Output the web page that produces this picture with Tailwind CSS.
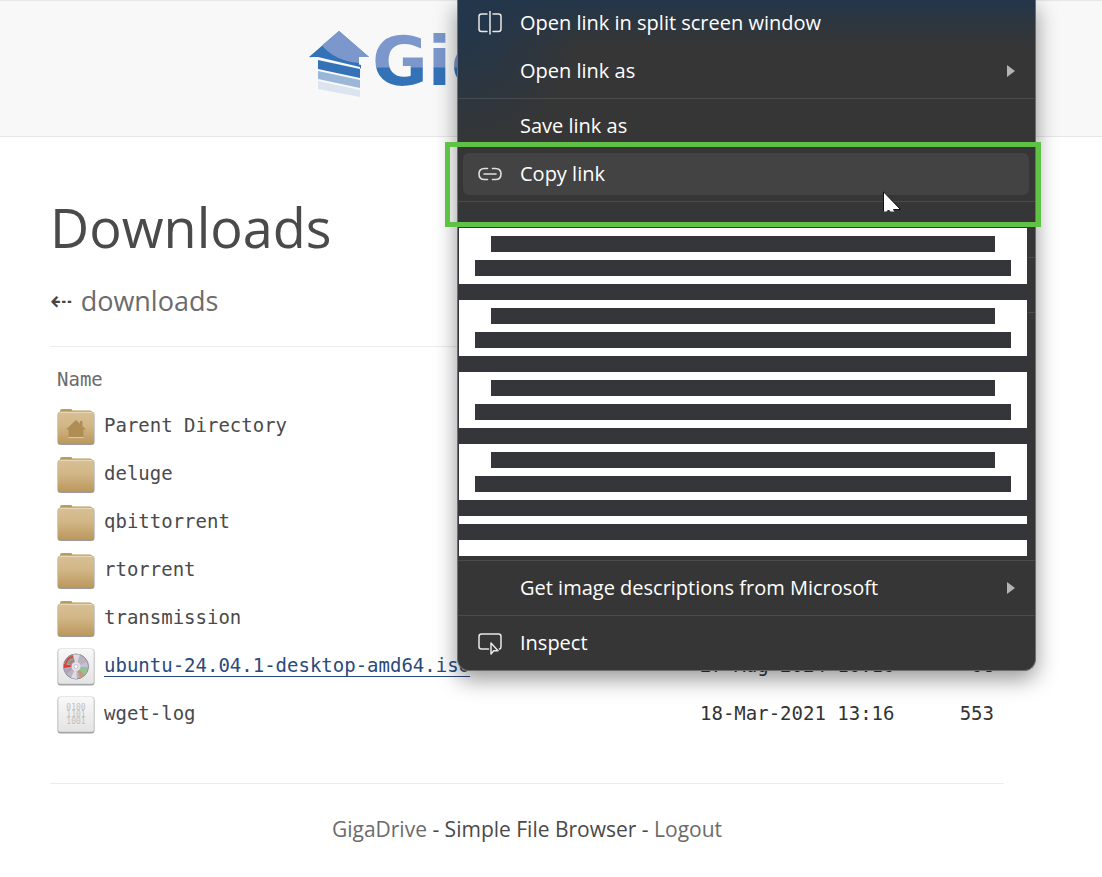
<!DOCTYPE html>
<html lang="en">
<head>
<meta charset="utf-8">
<meta name="viewport" content="width=device-width, initial-scale=1">
<title>Downloads - GigaDrive</title>
<script src="https://cdn.jsdelivr.net/npm/@tailwindcss/browser@4"></script>
</head>
<body class="relative min-h-screen overflow-x-hidden bg-white font-['Open_Sans',sans-serif] text-[#4a4a4a]">

<!-- Shared icon shapes -->
<svg class="absolute size-0" aria-hidden="true">
  <defs>
    <linearGradient id="tan" x1="0" y1="0" x2="0" y2="1"><stop offset="0" stop-color="#d8c096"/><stop offset=".45" stop-color="#d2b686"/><stop offset="1" stop-color="#ba985d"/></linearGradient>
    <linearGradient id="paper" x1="0" y1="0" x2="0" y2="1"><stop offset="0" stop-color="#f8f8f8"/><stop offset="1" stop-color="#e4e4e4"/></linearGradient>
    <symbol id="folder" viewBox="0 0 38 38">
      <path d="M3 9V3q0-2 2-2h9q1 0 1.500 1.500H33q2 0 2.500 2V9z" fill="#b99a63"/>
      <rect x=".5" y="4" width="37" height="33" rx="3" fill="#9b9a9c"/>
      <rect x="1" y="3.500" width="36" height="32" rx="2.500" fill="url(#tan)"/>
      <path d="M3 4.500h32" stroke="#e8d6b4"/>
    </symbol>
    <symbol id="sheet" viewBox="0 0 38 38">
      <rect x=".5" y="2" width="37" height="35.500" rx="3" fill="#a4a4a4"/>
      <rect x=".5" y=".5" width="37" height="35.500" rx="3" fill="#d0d0d0"/>
      <rect x="1.500" y="1" width="35" height="34.500" rx="2.500" fill="url(#paper)"/>
    </symbol>
  </defs>
</svg>

<header class="h-[137px] border-y border-[#e7e7e7] bg-[#f8f8f8] pr-[98px] pl-[50px]">
  <a href="#" class="mx-auto flex w-[436px] items-start" aria-label="GigaDrive">
    <svg class="mt-[30px] h-[66px] w-[60px] shrink-0" viewBox="0 0 60 66" aria-hidden="true">
      <path d="M30 0L60 26H50V36L0 26z" fill="#3472b8"/>
      <path d="M30 0L60 26H50V32Q26 30 13 14.500z" fill="#7b97cb"/>
      <path d="M0 26l9 1 43 10.500v-3.500L20 26z" fill="#3472b8"/>
      <path d="M0 26H9L51 36v5L9 29z" fill="#f8f8f8"/>
      <path d="M9 29L51 38v9L9 38z" fill="#3472b8"/>
      <path d="M9 40L51 49v8L9 48z" fill="#9ab7d7"/>
      <path d="M9 50L51 59v7L9 58z" fill="#dbe4ef"/>
    </svg>
    <span class="ml-[3px] mt-[13px] bg-linear-to-b from-[#7b97cb] from-[53px] to-[#3472b8] to-[54px] bg-clip-text font-['DejaVu_Sans',sans-serif] text-[68px] leading-[96px] font-bold text-transparent">GigaDrive</span>
  </a>
</header>

<main class="pr-[98px] pl-[50px]">
  <h1 class="pt-[51px] text-[54px] leading-[78px]">Downloads</h1>
  <p class="flex h-[81px] items-center gap-2 border-b border-[#ececec] pb-[9px] text-[27px] text-[#6b6b6b]">
    <span class="font-['DejaVu_Sans',sans-serif] text-[27px] text-[#444]" aria-hidden="true">⇠</span>
    <a href="#">downloads</a>
  </p>

  <table class="mt-[10px] w-full font-['DejaVu_Sans_Mono',monospace] text-[19px]">
    <thead>
      <tr class="h-11 text-left text-[#6b6b6b]">
        <th class="pl-[7px] font-normal"><a href="#">Name</a></th>
        <th class="w-[240px]"></th>
        <th class="w-[64px]"></th>
      </tr>
    </thead>
    <tbody>
      <tr class="h-12">
        <td class="pl-[7px]"><a href="#" class="flex items-center gap-[9px]">
          <svg class="mt-1 size-[38px]" viewBox="0 0 38 38" aria-hidden="true"><use href="#folder"/><path d="M19 12l10 9.500h-2.500V29h-15v-7.500H9L19 12zM23 13h2.500v5H23z" fill="#b08d55"/><path d="M11.500 29.500h15" stroke="#e0caa0"/></svg>Parent Directory</a></td>
        <td></td><td></td>
      </tr>
      <tr class="h-12">
        <td class="pl-[7px]"><a href="#" class="flex items-center gap-[9px]"><svg class="mt-1 size-[38px]" aria-hidden="true"><use href="#folder"/></svg>deluge</a></td>
        <td></td><td></td>
      </tr>
      <tr class="h-12">
        <td class="pl-[7px]"><a href="#" class="flex items-center gap-[9px]"><svg class="mt-1 size-[38px]" aria-hidden="true"><use href="#folder"/></svg>qbittorrent</a></td>
        <td></td><td></td>
      </tr>
      <tr class="h-12">
        <td class="pl-[7px]"><a href="#" class="flex items-center gap-[9px]"><svg class="mt-1 size-[38px]" aria-hidden="true"><use href="#folder"/></svg>rtorrent</a></td>
        <td></td><td></td>
      </tr>
      <tr class="h-12">
        <td class="pl-[7px]"><a href="#" class="flex items-center gap-[9px]"><svg class="mt-1 size-[38px]" aria-hidden="true"><use href="#folder"/></svg>transmission</a></td>
        <td></td><td></td>
      </tr>
      <tr class="h-12">
        <td class="pl-[7px]"><a href="#" class="flex items-center gap-[9px] text-[#2a4a7c]">
          <svg class="mt-1 size-[38px]" viewBox="0 0 38 38" aria-hidden="true"><use href="#sheet"/>
            <circle cx="19" cy="18.500" r="12.500" fill="#b9b4bf" stroke="#8d8994"/>
            <path d="M19 18.500L7 15Q9 8 16 6.500z" fill="#a98088"/>
            <path d="M19 18.500L7 20v-4z" fill="#e0402e"/>
            <path d="M8.500 17Q10 10 16 8.500" fill="none" stroke="#d8453a" stroke-width="1.500"/>
            <path d="M10.500 16Q12 12 16 11" fill="none" stroke="#72b58d" stroke-width="1.500"/>
            <path d="M19 18.500L16 6.500h7z" fill="#dcd9e0"/>
            <path d="M19 18.500L30 14l1 5z" fill="#c9bddd"/>
            <path d="M19 18.500L31 20l-3 7z" fill="#8fc58f"/>
            <path d="M19 18.500L28 27l-5 3.500z" fill="#c49b78"/>
            <path d="M19 18.500L20 31l-6-1z" fill="#dedbe4"/>
            <path d="M19 18.500L9 26l-2-4z" fill="#aaa2bd"/>
            <circle cx="19" cy="18.500" r="4.500" fill="#e4e2e8"/><circle cx="19" cy="18.500" r="2" fill="#fff" stroke="#c2c0c6"/>
          </svg><span class="underline decoration-1 underline-offset-4">ubuntu-24.04.1-desktop-amd64.iso</span></a></td>
        <td class="text-[#333]">27-Aug-2024 16:16</td><td class="pr-[10px] text-right text-[#333]">6G</td>
      </tr>
      <tr class="h-12">
        <td class="pl-[7px]"><a href="#" class="flex items-center gap-[9px]">
          <svg class="mt-1 size-[38px]" viewBox="0 0 38 38" aria-hidden="true"><use href="#sheet"/><g font-family="DejaVu Sans Mono" font-size="8" text-anchor="middle" fill="#c0c0c0"><text x="19" y="14">0100</text><text x="19" y="21">1101</text><text x="19" y="28">1001</text></g></svg>wget-log</a></td>
        <td class="text-[#333]">18-Mar-2021 13:16</td><td class="pr-[10px] text-right text-[#333]">553</td>
      </tr>
    </tbody>
  </table>
</main>

<footer class="mt-[46px] mr-[98px] ml-[50px] border-t border-[#ececec] pt-[29px] text-center text-[21px] leading-8">
  <a href="#" class="text-[#6b6b6b]">GigaDrive</a> - Simple File Browser - <a href="#" class="text-[#6b6b6b]">Logout</a>
</footer>

<!-- Browser context menu floating over the page -->
<div role="menu" class="absolute top-0 left-[457px] w-[579px] overflow-hidden rounded-b-xl border-x border-b border-[#6e6e6e] bg-[#363636] bg-[radial-gradient(ellipse_at_0_0,#24364a_0,#24364a_30px,transparent_130px),linear-gradient(to_bottom,#24364a,#363636_45px)] pb-[3px] text-[20px] text-white shadow-[0_8px_22px_rgba(0,0,0,0.42)]">
  <button role="menuitem" class="flex h-[46px] w-full items-center pl-5">
    <svg class="mr-[18px] size-6" viewBox="0 0 24 24" fill="none" stroke="#e8e8e8" stroke-width="1.500" stroke-linecap="round" aria-hidden="true"><path d="M12 .5v22.500M9 3H3.500Q1 3 1 5.500v12.500Q1 20.500 3.500 20.500H9M15 3h5.500Q23 3 23 5.500v12.500Q23 20.500 20.500 20.500H15"/></svg>
    Open link in split screen window
  </button>
  <button role="menuitem" class="flex h-[49px] w-full items-center justify-between pr-[19px] pl-[62px]">Open link as
    <svg class="h-3 w-[10px]" viewBox="0 0 10 12" aria-hidden="true"><path d="M1 0l8 6-8 6z" fill="#b4b4b4"/></svg></button>
  <div role="separator" class="my-[3px] h-px bg-white/10"></div>
  <button role="menuitem" class="flex h-12 w-full items-center pl-[62px]">Save link as</button>
  <div class="h-12 pr-[6px] pl-[5px] py-[3px]">
    <button role="menuitem" class="flex h-[42px] w-full items-center rounded-md bg-[#434343] pl-[15px]">
      <svg class="mr-[18px] h-[14px] w-6" viewBox="0 0 24 14" fill="none" stroke="#e0e0e0" stroke-width="1.600" stroke-linecap="round" aria-hidden="true"><path d="M9.500 1.500H6.500Q1 1.500 1 7t5.500 5.500h3M14.500 1.500H17.500Q23 1.500 23 7t-5.500 5.500h-3M6 7h12"/></svg>
      Copy link
    </button>
  </div>
  <div role="separator" class="my-[3px] h-px bg-white/10"></div>

  <!-- Blanked-out entries -->
  <div class="relative h-[352px] pt-[7px] pr-2">
    <div class="absolute top-[52px] right-0 h-px w-[7px] bg-white/10"></div>
    <div class="absolute top-[107px] right-0 h-px w-[7px] bg-white/10"></div>
    <div class="flex flex-col gap-4 bg-[#35363a] pt-4 pl-px">
      <div class="bg-white px-4 py-2"><div class="mx-4 h-4 bg-[#35363a]"></div><div class="mt-2 h-4 bg-[#35363a]"></div></div>
      <div class="bg-white px-4 py-2"><div class="mx-4 h-4 bg-[#35363a]"></div><div class="mt-2 h-4 bg-[#35363a]"></div></div>
      <div class="bg-white px-4 py-2"><div class="mx-4 h-4 bg-[#35363a]"></div><div class="mt-2 h-4 bg-[#35363a]"></div></div>
      <div class="bg-white px-4 py-2"><div class="mx-4 h-4 bg-[#35363a]"></div><div class="mt-2 h-4 bg-[#35363a]"></div></div>
      <div class="h-2 bg-white"></div>
      <div class="h-4 bg-white"></div>
    </div>
  </div>
  <div role="separator" class="my-[3px] h-px bg-white/10"></div>
  <button role="menuitem" class="flex h-12 w-full items-center justify-between pr-[19px] pl-[62px]">Get image descriptions from Microsoft
    <svg class="h-3 w-[10px]" viewBox="0 0 10 12" aria-hidden="true"><path d="M1 0l8 6-8 6z" fill="#b4b4b4"/></svg></button>
  <div role="separator" class="my-[3px] h-px bg-white/10"></div>
  <button role="menuitem" class="flex h-12 w-full items-center pl-5">
    <svg class="mr-[18px] size-6" viewBox="0 0 24 24" fill="none" stroke="#e8e8e8" stroke-width="1.500" stroke-linejoin="round" stroke-linecap="round" aria-hidden="true"><path d="M10.500 18H3.500Q1 18 1 15.500v-10Q1 3 3.500 3h17Q23 3 23 5.500v10Q23 17.500 21.500 18"/><path d="M13 12v11l2.700-3.300H20z"/></svg>
    Inspect
  </button>
</div>

<!-- Highlight frame and mouse pointer -->
<div class="absolute top-[142px] left-[445px] h-[85px] w-[596px] border-[5px] border-[#5fc245]"></div>
<svg class="absolute top-[191px] left-[883px] h-[22px] w-[19px]" viewBox="0 0 19 22" aria-hidden="true"><path d="M.5 .8V20.500H4L5.500 19 7 20.500h4.500L10.500 18.500H17.500z" fill="#fff"/><path d="M.5 20.500V.8L17.500 18.500H10.500L11.500 20M4 20.500L5.500 19 7 20.500" fill="none" stroke="#111"/></svg>
</body>
</html>
